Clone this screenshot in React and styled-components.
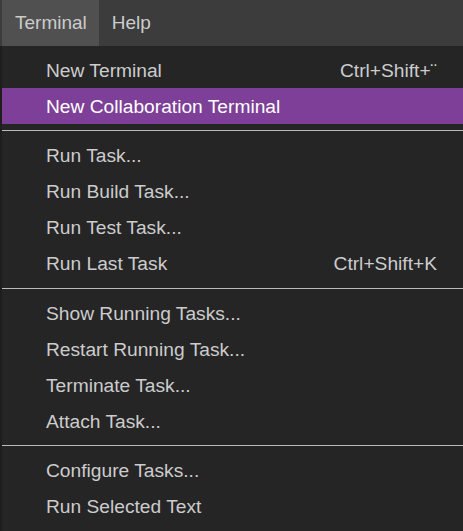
import React from "react";
import styled, { createGlobalStyle } from "styled-components";

const Global = createGlobalStyle`
  html, body { margin: 0; padding: 0; background: #1e1e1e; }
  body { font-family: Arial, "Liberation Sans", Helvetica, sans-serif; overflow: hidden; }
`;

const Page = styled.div`
  width: 463px;
  height: 531px;
  display: flex;
  flex-direction: column;
  background: #1e1e1e;
`;

const MenuBar = styled.div`
  height: 46px;
  display: flex;
  align-items: stretch;
  background: #3c3c3c;
  padding-left: 2px;
`;

const BarItem = styled.div`
  display: flex;
  align-items: center;
  padding: 0 12px 0 13px;
  font-size: 19px;
  color: #cccccc;
  background: ${(p) => (p.$open ? "#505050" : "transparent")};
`;

const Menu = styled.div`
  margin-left: 2px;
  flex: 1;
  background: #252526;
  padding-top: 6px;
  display: flex;
  flex-direction: column;
`;

const Row = styled.div`
  height: 36px;
  display: flex;
  align-items: center;
  justify-content: space-between;
  padding: 1px 26px 0 44px;
  box-sizing: border-box;
  font-size: 19.2px;
  color: ${(p) => (p.$active ? "#ffffff" : "#cccccc")};
  background: ${(p) => (p.$active ? "#7d3f97" : "transparent")};
`;

const Shortcut = styled.span`
  color: #cccccc;
`;

const Separator = styled.div`
  height: 1px;
  margin: 6px 0 6.5px;
  background: #bbbbbb;
`;

const groups = [
  [
    { label: "New Terminal", shortcut: "Ctrl+Shift+¨" },
    { label: "New Collaboration Terminal", active: true },
  ],
  [
    { label: "Run Task..." },
    { label: "Run Build Task..." },
    { label: "Run Test Task..." },
    { label: "Run Last Task", shortcut: "Ctrl+Shift+K" },
  ],
  [
    { label: "Show Running Tasks..." },
    { label: "Restart Running Task..." },
    { label: "Terminate Task..." },
    { label: "Attach Task..." },
  ],
  [{ label: "Configure Tasks..." }, { label: "Run Selected Text" }],
];

export default function App() {
  return (
    <Page>
      <Global />
      <MenuBar>
        <BarItem $open>Terminal</BarItem>
        <BarItem>Help</BarItem>
      </MenuBar>
      <Menu>
        {groups.map((g, gi) => (
          <React.Fragment key={gi}>
            {gi > 0 && <Separator />}
            {g.map((it) => (
              <Row key={it.label} $active={it.active}>
                <span>{it.label}</span>
                {it.shortcut && <Shortcut>{it.shortcut}</Shortcut>}
              </Row>
            ))}
          </React.Fragment>
        ))}
      </Menu>
    </Page>
  );
}
